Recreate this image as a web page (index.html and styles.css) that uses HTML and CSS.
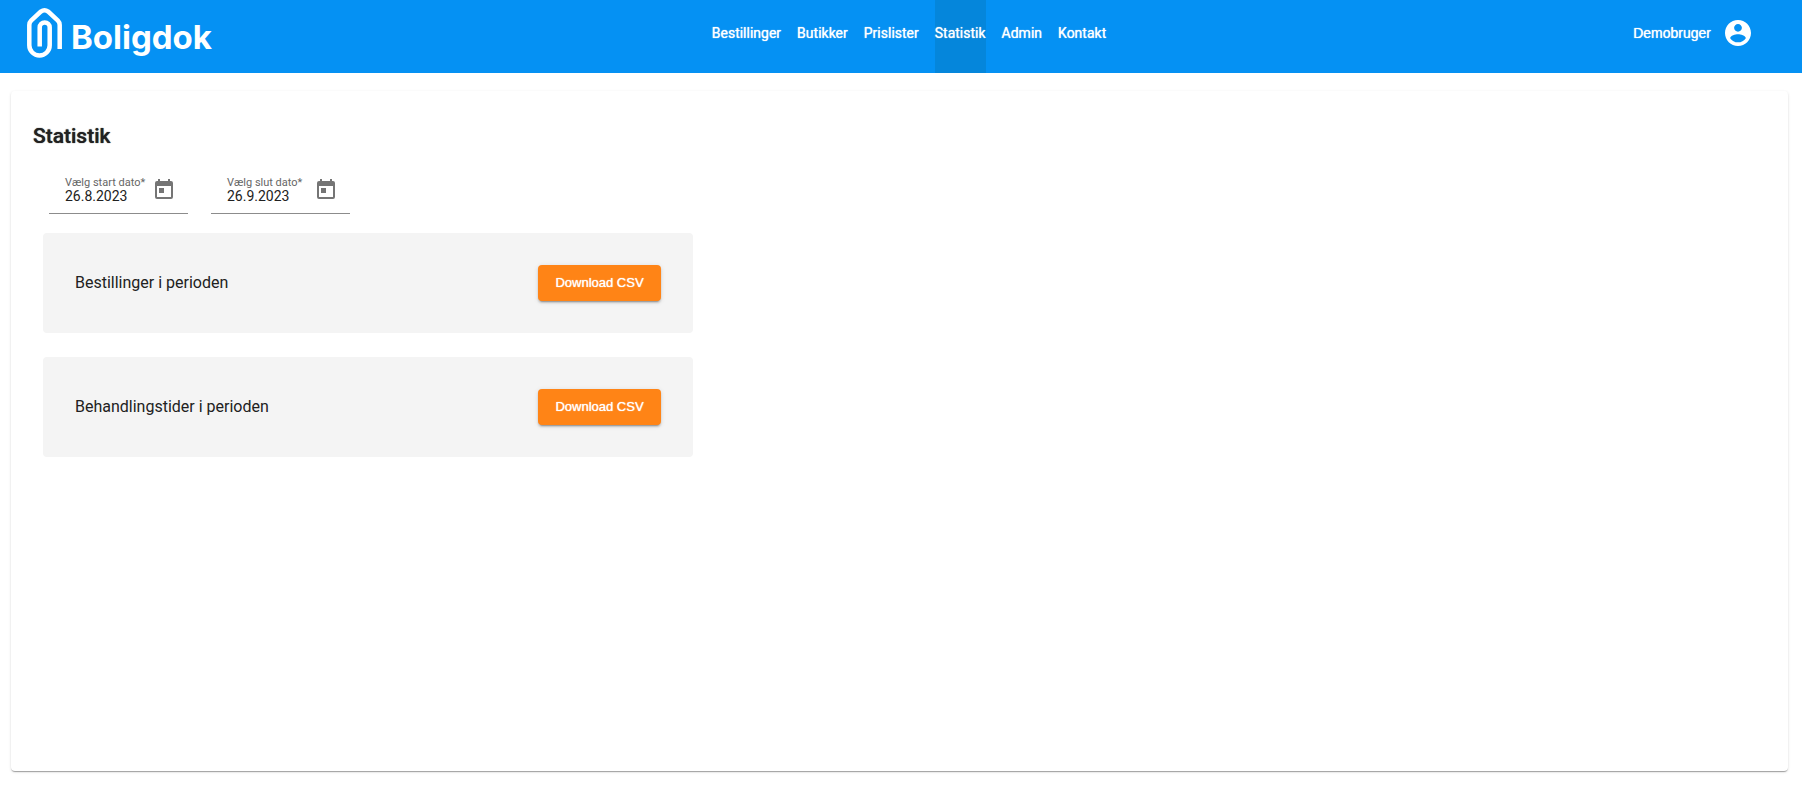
FILE: index.html
```html
<!DOCTYPE html>
<html lang="da">
<head>
<meta charset="utf-8">
<title>Boligdok – Statistik</title>
<link rel="stylesheet" href="styles.css">
</head>
<body>
<header class="topbar">
  <a class="logo" href="#" aria-label="Boligdok">
    <svg class="logo-mark" viewBox="0 0 35 50" width="35" height="50" aria-hidden="true">
      <path d="M12.700 38.500V19.500a5 5 0 0 1 10 0V37.300a10.200 10.200 0 0 1-20.400 0V17q0-2.600 1.800-4.400L13.800 3.600q3.700-2.600 7.400 0L30.900 12.600q1.800 1.800 1.800 4.400V41" fill="none" stroke="currentColor" stroke-width="4.500"/>
    </svg>
    <span class="logo-text">Boligdok</span>
  </a>
  <nav class="nav">
    <a class="nav-link" href="#">Bestillinger</a>
    <a class="nav-link" href="#">Butikker</a>
    <a class="nav-link" href="#">Prislister</a>
    <a class="nav-link nav-link-active" href="#" aria-current="page">Statistik</a>
    <a class="nav-link" href="#">Admin</a>
    <a class="nav-link" href="#">Kontakt</a>
  </nav>
  <button class="user" type="button">
    <span>Demobruger</span>
    <svg viewBox="2 2 20 20" width="26" height="26" aria-hidden="true"><path fill="currentColor" d="M12 2C6.480 2 2 6.480 2 12s4.480 10 10 10 10-4.480 10-10S17.520 2 12 2zm0 3c1.660 0 3 1.340 3 3s-1.340 3-3 3-3-1.340-3-3 1.340-3 3-3zm0 14.200c-2.500 0-4.710-1.280-6-3.220.030-1.990 4-3.080 6-3.080 1.990 0 5.970 1.090 6 3.080-1.290 1.940-3.500 3.220-6 3.220z"/></svg>
  </button>
</header>
<main class="card">
  <h1 class="title">Statistik</h1>
  <form class="dates">
    <div class="field">
      <div class="field-text">
        <label class="field-label" for="start">Vælg start dato*</label>
        <input class="field-input" id="start" type="text" value="26.8.2023">
      </div>
      <button class="calendar" type="button" aria-label="Åbn kalender">
        <svg viewBox="0 0 24 24" width="24" height="24" aria-hidden="true"><path fill="currentColor" d="M19 4h-1V2h-2v2H8V2H6v2H5a2 2 0 0 0-2 2v14a2 2 0 0 0 2 2h14a2 2 0 0 0 2-2V6a2 2 0 0 0-2-2zm0 16H5V9h14v11zM7 11h5v5H7z"/></svg>
      </button>
    </div>
    <div class="field">
      <div class="field-text">
        <label class="field-label" for="slut">Vælg slut dato*</label>
        <input class="field-input" id="slut" type="text" value="26.9.2023">
      </div>
      <button class="calendar" type="button" aria-label="Åbn kalender">
        <svg viewBox="0 0 24 24" width="24" height="24" aria-hidden="true"><path fill="currentColor" d="M19 4h-1V2h-2v2H8V2H6v2H5a2 2 0 0 0-2 2v14a2 2 0 0 0 2 2h14a2 2 0 0 0 2-2V6a2 2 0 0 0-2-2zm0 16H5V9h14v11zM7 11h5v5H7z"/></svg>
      </button>
    </div>
  </form>
  <div class="reports">
    <section class="report">
      <span>Bestillinger i perioden</span>
      <button class="download" type="button">Download CSV</button>
    </section>
    <section class="report">
      <span>Behandlingstider i perioden</span>
      <button class="download" type="button">Download CSV</button>
    </section>
  </div>
</main>
</body>
</html>
```

FILE: styles.css
```css
* {
  box-sizing: border-box;
}

body {
  margin: 0;
  min-height: 100vh;
  display: flex;
  flex-direction: column;
  background: #fff;
  color: #212121;
  font-family: Roboto, sans-serif;
}

button {
  border: 0;
  padding: 0;
  background: none;
  cursor: pointer;
}

.topbar {
  display: grid;
  grid-template-columns: 1fr auto 1fr;
  padding-left: 16px;
  background: #0591f3;
  color: #fff;
}

.logo {
  display: flex;
  align-items: flex-start;
  gap: 9px;
  margin-left: 11px;
  padding-top: 8px;
  color: inherit;
  text-decoration: none;
}

.logo-text {
  padding-top: 8px;
  font: 700 33px/42px Inter, sans-serif;
}

.nav {
  display: flex;
  gap: 16px;
}

.nav-link {
  padding: 24px 0 31px;
  color: inherit;
  font-size: 14px;
  line-height: 18px;
  text-decoration: none;
  text-shadow: 0 0 1px currentColor;
}

.nav-link-active {
  background: #0586db;
}

.user {
  display: flex;
  align-items: center;
  align-self: start;
  justify-self: end;
  gap: 14px;
  margin: 20px 51px 0 0;
  color: inherit;
  font: 14px/18px "Liberation Sans", Arial, sans-serif;
  text-shadow: 0 0 1px currentColor;
}

.card {
  flex: 1;
  margin: 18px 14px 16px 11px;
  padding: 32px 22px;
  border-radius: 4px;
  box-shadow: 0 2px 1px -1px rgba(0, 0, 0, 0.2), 0 1px 1px rgba(0, 0, 0, 0.14), 0 1px 3px rgba(0, 0, 0, 0.12);
}

.title {
  margin: 0;
  font-size: 21px;
  font-weight: 500;
  line-height: 26px;
  text-shadow: 0 0 1px currentColor;
}

.dates {
  display: flex;
  gap: 23px;
  margin: 24px 0 19px 16px;
}

.field {
  display: flex;
  width: 139px;
  height: 41px;
  padding: 4px 12px 0 16px;
  border-bottom: 1px solid #8c8c8c;
}

.field-text {
  flex: 1;
  min-width: 0;
}

.field-label {
  display: block;
  color: #666;
  font-size: 11px;
  line-height: 12px;
  white-space: nowrap;
}

.field-input {
  display: block;
  width: 100%;
  height: 15px;
  padding: 0;
  border: 0;
  outline: 0;
  background: none;
  color: #212121;
  font: 14px/15px Roboto, sans-serif;
}

.calendar {
  align-self: flex-start;
  height: 24px;
  color: #757575;
}

.reports {
  display: grid;
  gap: 24px;
  max-width: 650px;
  margin-left: 10px;
}

.report {
  display: flex;
  align-items: center;
  justify-content: space-between;
  padding: 32px;
  border-radius: 4px;
  background: #f4f4f4;
  font-size: 16px;
  line-height: 20px;
}

.download {
  min-width: 123px;
  padding: 0 16px;
  border-radius: 4px;
  background: #ff8416;
  box-shadow: 0 3px 1px -2px rgba(0, 0, 0, 0.2), 0 2px 2px rgba(0, 0, 0, 0.14), 0 1px 5px rgba(0, 0, 0, 0.12);
  color: #fff;
  font: 13px/36px "Liberation Sans", Arial, sans-serif;
  text-shadow: 0 0 1px currentColor;
}
```
